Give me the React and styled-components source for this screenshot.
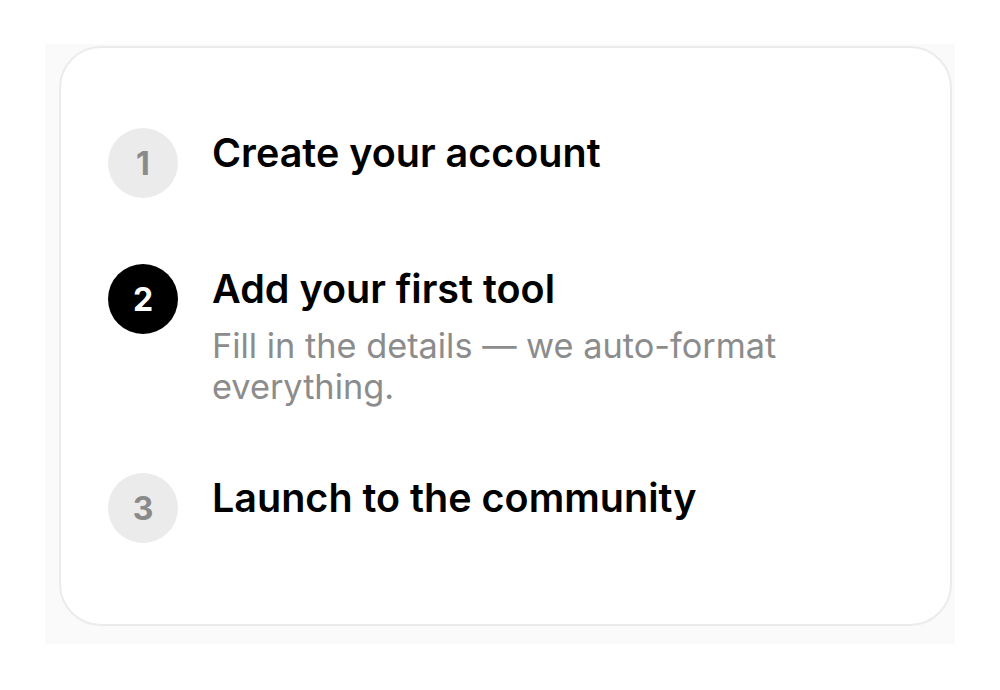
import React from 'react';
import styled, { createGlobalStyle } from 'styled-components';

const GlobalStyle = createGlobalStyle`
  html, body {
    margin: 0;
    padding: 0;
    background: #ffffff;
  }
  body {
    font-family: Inter, "Noto Sans", "Liberation Sans", sans-serif;
    -webkit-font-smoothing: antialiased;
  }
`;

const Page = styled.div`
  width: 1000px;
  height: 690px;
  padding: 44px 45px 0 45px;
  box-sizing: border-box;
`;

const Backdrop = styled.div`
  width: 910px;
  height: 600px;
  background: #fafafa;
  padding: 2px 3px 0 14px;
  box-sizing: border-box;
`;

const Card = styled.div`
  height: 580px;
  box-sizing: border-box;
  background: #ffffff;
  border: 2px solid #ebebeb;
  border-radius: 42px;
  padding: 80px 48px 0 47px;
  display: flex;
  flex-direction: column;
  gap: 66px;
`;

const Step = styled.div`
  display: flex;
  align-items: flex-start;
  gap: 34px;
`;

const Badge = styled.div`
  flex: none;
  width: 70px;
  height: 70px;
  border-radius: 50%;
  display: flex;
  align-items: center;
  justify-content: center;
  background: ${(p) => (p.$active ? '#000000' : '#ebebeb')};
  color: ${(p) => (p.$active ? '#ffffff' : '#8a8a8a')};
  font-size: 32px;
  font-weight: 700;
`;

const Body = styled.div`
  display: flex;
  flex-direction: column;
  padding-top: 2px;
`;

const Title = styled.div`
  font-size: 39.5px;
  font-weight: 600;
  line-height: 46px;
  color: #000000;
`;

const Desc = styled.div`
  margin-top: 13px;
  width: 600px;
  font-size: 34.3px;
  font-weight: 400;
  line-height: 41px;
  color: #8c8c8c;
`;

const steps = [
  { n: 1, title: 'Create your account' },
  { n: 2, title: 'Add your first tool', desc: 'Fill in the details — we auto-format everything.', active: true },
  { n: 3, title: 'Launch to the community' },
];

const App = () => (
  <>
    <GlobalStyle />
    <Page>
      <Backdrop>
        <Card>
          {steps.map((s) => (
            <Step key={s.n}>
              <Badge $active={s.active}>{s.n}</Badge>
              <Body>
                <Title>{s.title}</Title>
                {s.desc && <Desc>{s.desc}</Desc>}
              </Body>
            </Step>
          ))}
        </Card>
      </Backdrop>
    </Page>
  </>
);

export default App;
